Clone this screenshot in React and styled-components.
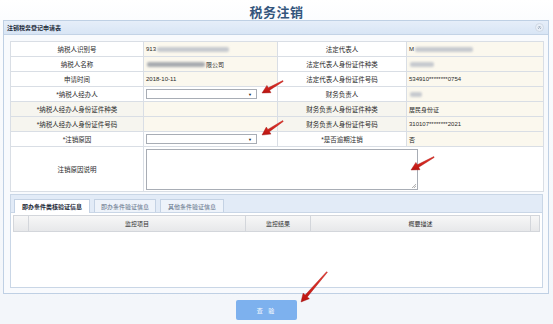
import styled, { createGlobalStyle } from "styled-components";

const Global = createGlobalStyle`
  html, body { margin: 0; padding: 0; }
  body {
    background: #f3f6fa;
    font-family: "Liberation Sans", "Noto Sans CJK SC", sans-serif;
    color: #333;
  }
`;

const Page = styled.div`
  position: relative;
  width: 553px;
  height: 324px;
  overflow: hidden;
  background: linear-gradient(#ffffff 0px, #fbfcfe 20px, #f3f6fa 300px);
`;

const Title = styled.h1`
  margin: 0;
  height: 20px;
  line-height: 24px;
  text-align: center;
  font-size: 13px;
  font-weight: bold;
  color: #33557c;
  letter-spacing: 0.5px;
  font-family: "Noto Sans CJK SC", sans-serif;
`;

const Panel = styled.section`
  margin: 0 3px 0 3px;
  width: 544px;
  border: 1px solid #bfd0e4;
  background: #f8fafd;
`;

const PanelHead = styled.div`
  display: flex;
  align-items: center;
  justify-content: space-between;
  height: 13px;
  padding: 0 4px 0 3px;
  background: linear-gradient(#e6eef9, #d8e5f5);
  border-bottom: 1px solid #c3d3e6;
  font-family: "Noto Sans CJK SC", sans-serif;
  font-size: 6px;
  font-weight: bold;
  color: #1f2d3d;
`;

const Collapse = styled.span`
  display: flex;
  align-items: center;
  justify-content: center;
  width: 7px;
  height: 7px;
  border-radius: 50%;
  background: #e9eff7;
  border: 1px solid #cfd9e6;
`;

const PanelBody = styled.div`
  padding: 6px 5px 5px 6px;
`;

const Form = styled.table`
  width: 533px;
  border-collapse: collapse;
  table-layout: fixed;
  font-size: 6px;
  background: #fff;
`;

const Cell = styled.td`
  height: ${({ $h }) => $h || 14}px;
  padding: 0 2px;
  border: 1px solid #d9dee5;
  text-align: ${({ $label }) => ($label ? "center" : "left")};
  vertical-align: ${({ $top }) => ($top ? "top" : "middle")};
  font-size: ${({ $label }) => ($label ? 6.5 : 6)}px;
  background: ${({ $bg }) => $bg || "#fff"};
  color: #2a2a2a;
  white-space: nowrap;
  overflow: hidden;
`;

const Blur = styled.span`
  display: inline-block;
  width: ${({ $w }) => $w}px;
  height: 5px;
  margin: 0 1px;
  vertical-align: middle;
  border-radius: 2px;
  background: ${({ $dark }) => ($dark ? "#a9acb1" : "#c7cacf")};
  filter: blur(1.2px);
`;

const Select = styled.div`
  display: flex;
  align-items: center;
  justify-content: flex-end;
  width: 111px;
  height: 10px;
  padding-right: 4px;
  box-sizing: border-box;
  border: 1px solid #a8adb5;
  background: #fff;
  font-size: 4px;
  color: #222;
`;

const TextArea = styled.div`
  position: relative;
  width: 272px;
  height: 41px;
  margin-top: 2px;
  box-sizing: border-box;
  border: 1px solid #a8adb5;
  background: #fff;
`;

const Grip = styled.span`
  position: absolute;
  right: 1px;
  bottom: 1px;
  width: 4px;
  height: 4px;
  background: linear-gradient(135deg, transparent 50%, #b5b5b5 50%, transparent 65%, #b5b5b5 75%, transparent 85%);
`;

const TabBox = styled.div`
  margin-top: 2px;
  width: 533px;
  height: 94px;
  box-sizing: border-box;
  border: 1px solid #c9d6e6;
  background: #fff;
  display: flex;
  flex-direction: column;
`;

const TabStrip = styled.div`
  display: flex;
  align-items: flex-end;
  gap: 4px;
  height: 18px;
  padding-left: 3px;
  box-sizing: border-box;
  background: #e2ebf7;
  border-bottom: 1px solid #c9d6e6;
`;

const Tab = styled.div`
  width: ${({ $w }) => $w}px;
  box-sizing: border-box;
  display: flex;
  align-items: center;
  justify-content: center;
  font-family: "Noto Sans CJK SC", sans-serif;
  font-size: 6px;
  font-weight: ${({ $active }) => ($active ? "bold" : "normal")};
  color: ${({ $active }) => ($active ? "#1e2a38" : "#5d6f86")};
  background: ${({ $active }) => ($active ? "#ffffff" : "#eef3fa")};
  border: 1px solid #c4d2e4;
  border-bottom: none;
  margin-bottom: ${({ $active }) => ($active ? "-1px" : "0")};
  height: ${({ $active }) => ($active ? 14 : 13)}px;
`;

const GridWrap = styled.div`
  padding: 2px 2px 0 2px;
`;

const GridHead = styled.div`
  display: grid;
  grid-template-columns: 15px 217px 65px 220px 1fr;
  height: 15px;
  border: 1px solid #d3d6db;
  background: linear-gradient(#f7f7f7, #e7e8ea);
  font-family: "Noto Sans CJK SC", sans-serif;
  font-size: 6px;
  color: #333;
`;

const HeadCol = styled.div`
  display: flex;
  align-items: center;
  justify-content: center;
  border-right: ${({ $last }) => ($last ? "none" : "1px solid #d3d6db")};
`;

const ButtonRow = styled.div`
  display: flex;
  padding: 6px 0 0 236px;
`;

const Button = styled.button`
  width: 61px;
  height: 20px;
  border: none;
  border-radius: 2px;
  background: #7db1ee;
  color: #fff;
  font-family: "Noto Sans CJK SC", sans-serif;
  font-size: 6px;
  letter-spacing: 2px;
  padding: 0;
`;

const Overlay = styled.svg`
  position: absolute;
  left: 0;
  top: 0;
  pointer-events: none;
`;

const CREAM = "#fbf8ee";
const GREYCREAM = "#f6f5ef";

function arrowPoints(tip, tail) {
  const dx = tip[0] - tail[0];
  const dy = tip[1] - tail[1];
  const len = Math.hypot(dx, dy);
  const ux = dx / len;
  const uy = dy / len;
  const nx = -uy;
  const ny = ux;
  const head = 8;
  const bx = tip[0] - ux * head;
  const by = tip[1] - uy * head;
  const p = (x, y, w) => [x + nx * w, y + ny * w];
  const pts = [
    p(tail[0], tail[1], 0.5),
    p(bx, by, 1.4),
    p(bx, by, 4.2),
    tip,
    p(bx, by, -4.2),
    p(bx, by, -1.4),
    p(tail[0], tail[1], -0.5),
  ];
  return pts.map((q) => q.map((v) => v.toFixed(1)).join(",")).join(" ");
}

const arrows = [
  [[262, 93], [283, 81]],
  [[262, 135], [283, 121]],
  [[411, 170], [434, 157]],
  [[301, 302], [327, 272]],
];

function Row({ l1, v1, l2, v2, bg1 = CREAM, bg2 = CREAM, lbg = "#fff" }) {
  return (
    <tr>
      <Cell $label $bg={lbg}>{l1}</Cell>
      <Cell $bg={bg1}>{v1}</Cell>
      <Cell $label $bg={lbg}>{l2}</Cell>
      <Cell $bg={bg2}>{v2}</Cell>
    </tr>
  );
}

export default function App() {
  return (
    <Page>
      <Global />
      <Title>税务注销</Title>
      <Panel>
        <PanelHead>
          <span>注销税务登记申请表</span>
          <Collapse>
            <svg width="5" height="5" viewBox="0 0 5 5">
              <path d="M1 2.5 L2.5 1 L4 2.5 M1 4 L2.5 2.5 L4 4" stroke="#8a99ad" strokeWidth="0.7" fill="none" />
            </svg>
          </Collapse>
        </PanelHead>
        <PanelBody>
          <Form>
            <colgroup>
              <col style={{ width: 133 }} />
              <col style={{ width: 134 }} />
              <col style={{ width: 129 }} />
              <col style={{ width: 137 }} />
            </colgroup>
            <tbody>
              <Row l1="纳税人识别号" v1={<>913<Blur $w={72} /></>} l2="法定代表人" v2={<>M<Blur $w={58} /></>} />
              <Row l1="纳税人名称" v1={<><Blur $w={58} $dark />限公司</>} l2="法定代表人身份证件种类" v2={<Blur $w={24} />} />
              <Row l1="申请时间" v1="2018-10-11" l2="法定代表人身份证件号码" v2="534910********0754" />
              <Row
                l1="*纳税人经办人"
                v1={<Select>▼</Select>}
                bg1="#fff"
                l2="财务负责人"
                v2={<Blur $w={12} />}
              />
              <Row l1="*纳税人经办人身份证件种类" lbg={GREYCREAM} l2="财务负责人身份证件种类" v2="居民身份证" />
              <Row l1="*纳税人经办人身份证件号码" lbg={GREYCREAM} l2="财务负责人身份证件号码" v2="310107********2021" />
              <Row l1="*注销原因" v1={<Select>▼</Select>} bg1="#fff" l2="*是否逾期注销" v2="否" />
              <tr>
                <Cell $label $h={44}>注销原因说明</Cell>
                <Cell colSpan={3} $top $h={44}>
                  <TextArea><Grip /></TextArea>
                </Cell>
              </tr>
            </tbody>
          </Form>
          <TabBox>
            <TabStrip>
              <Tab $active $w={76}>即办条件类核验证信息</Tab>
              <Tab $w={62}>即办条件验证信息</Tab>
              <Tab $w={64}>其他条件验证信息</Tab>
            </TabStrip>
            <GridWrap>
              <GridHead>
                <HeadCol />
                <HeadCol>监控项目</HeadCol>
                <HeadCol>监控结果</HeadCol>
                <HeadCol>概要描述</HeadCol>
                <HeadCol $last />
              </GridHead>
            </GridWrap>
          </TabBox>
        </PanelBody>
      </Panel>
      <ButtonRow>
        <Button>查 验</Button>
      </ButtonRow>
      <Overlay width="553" height="324" viewBox="0 0 553 324">
        <defs>
          <linearGradient id="red" x1="0" y1="0" x2="0" y2="1">
            <stop offset="0" stopColor="#ef3b30" />
            <stop offset="1" stopColor="#b8120f" />
          </linearGradient>
        </defs>
        {arrows.map(([tip, tail], i) => (
          <polygon key={i} points={arrowPoints(tip, tail)} fill="url(#red)" stroke="#9c0f0c" strokeWidth="0.4" />
        ))}
      </Overlay>
    </Page>
  );
}
